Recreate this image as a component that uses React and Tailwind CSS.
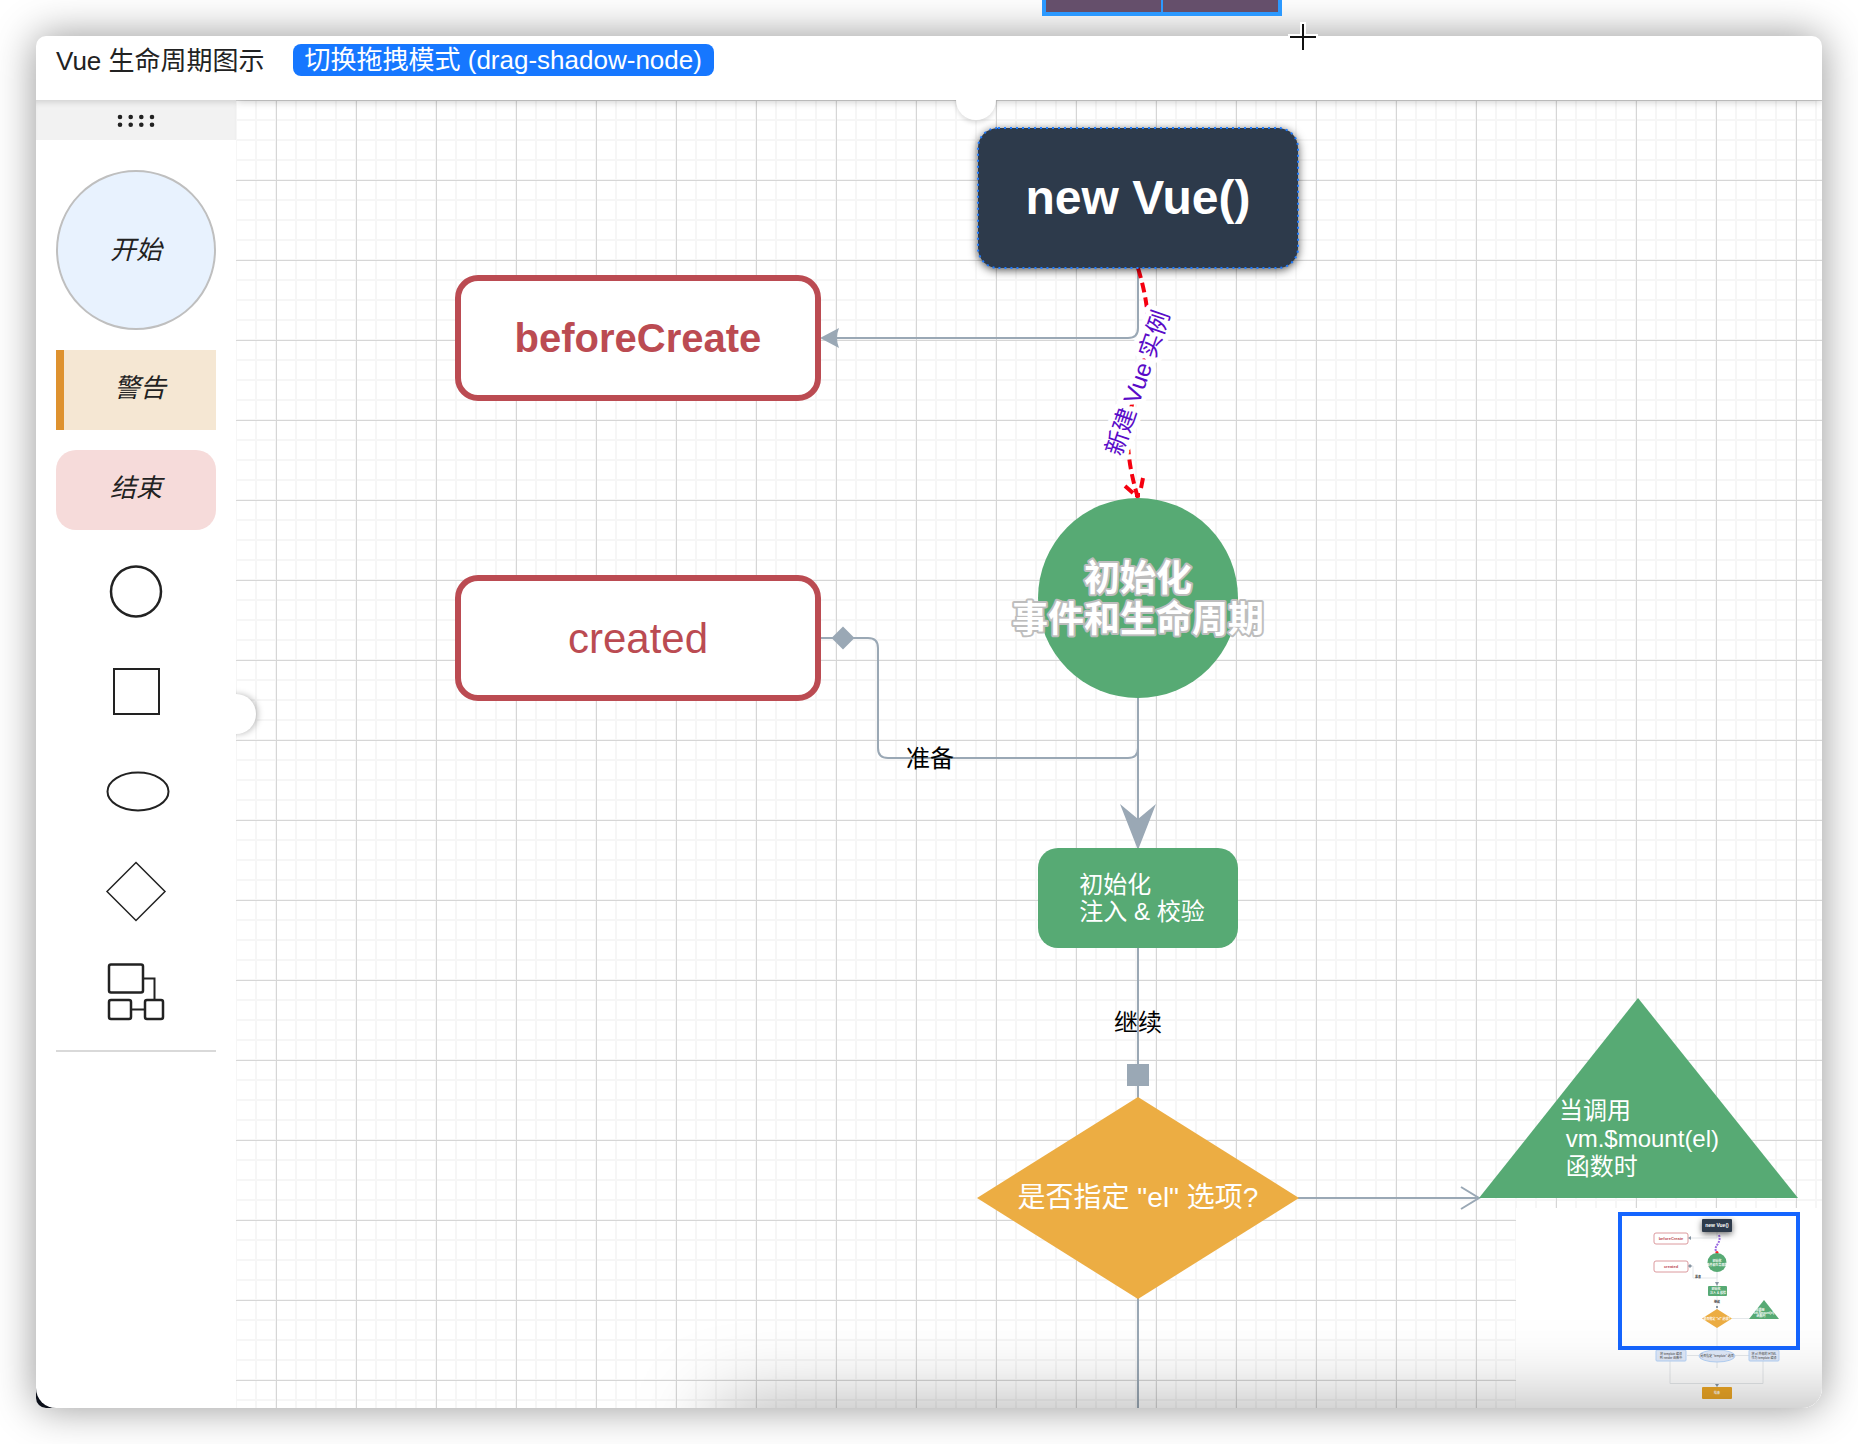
const MAJOR = 80;

const edgeColor = '#9aa8b5';

function GridBackground() {
  return (
    <svg className="absolute inset-0 h-full w-full" aria-hidden="true">
      <defs>
        <pattern id="grid-minor" x="19" y="19" width="20" height="20" patternUnits="userSpaceOnUse">
          <rect width="20" height="2" fill="#f6f6f6" />
          <rect width="2" height="20" fill="#f6f6f6" />
        </pattern>
        <pattern id="grid-major" x="40" y="0" width={MAJOR} height={MAJOR} patternUnits="userSpaceOnUse">
          <rect width={MAJOR} height="1" fill="#d6d6d6" />
          <rect width="1" height={MAJOR} fill="#d6d6d6" />
        </pattern>
      </defs>
      <rect width="100%" height="100%" fill="url(#grid-minor)" />
      <rect width="100%" height="100%" fill="url(#grid-major)" />
    </svg>
  );
}

function Edges() {
  return (
    <svg className="absolute left-0 top-0 h-[1308px] w-[1586px]" fill="none" stroke={edgeColor} strokeWidth="2" aria-hidden="true">
      <path d="M902 168V228Q902 238 892 238H586" />
      <path d="M584 238L603 228Q599 238 603 248Z" fill={edgeColor} stroke="none" />
      <path d="M902 598V648Q902 658 892 658H652Q642 658 642 648V548Q642 538 632 538H584" />
      <path d="M607 526.500L618.500 538L607 549.500L595.500 538Z" fill={edgeColor} stroke="none" />
      <path d="M902 598V735" />
      <path d="M884 704L902 719L920 704L902 750Z" fill={edgeColor} stroke="none" />
      <path d="M902 848V1000M902 1196V1308" />
      <rect x="891" y="964" width="22" height="22" fill={edgeColor} stroke="none" />
      <path d="M1062 1098H1243M1225 1087L1243 1098L1225 1109" />
      <g stroke="#f5000f" strokeWidth="4">
        <path d="M902 168C937 283 867 283 902 398" strokeDasharray="10 5" />
        <path d="M889 386L897 393M907 378L905 388M899 395H904" />
      </g>
    </svg>
  );
}

function LifecycleNode({ className, children }) {
  return <div className={'absolute flex items-center justify-center whitespace-pre ' + className}>{children}</div>;
}

function Canvas() {
  return (
    <main className="relative min-w-0 flex-1 overflow-hidden bg-white">
      <GridBackground />
      <div className="absolute left-[878px] top-[905px] text-2xl leading-9 text-black">继续</div>
      <Edges />
      <div className="absolute left-[670px] top-[641px] text-2xl leading-9 text-black">准备</div>
      <LifecycleNode className="left-[742px] top-[28px] h-[140px] w-[320px] rounded-[20px] bg-[#2d3a4b] text-[48px] font-bold text-white shadow-[0_2px_10px_rgba(0,0,0,0.7)]">
        new Vue()
        <svg className="absolute inset-0 h-full w-full overflow-visible" aria-hidden="true">
          <rect width="320" height="140" rx="20" fill="none" stroke="#1f7bff" strokeWidth="2" strokeDasharray="2 4" />
        </svg>
      </LifecycleNode>
      <LifecycleNode className="left-[219px] top-[175px] h-[126px] w-[366px] rounded-[23px] border-6 border-[#bb4b52] bg-white text-[40px] font-bold text-[#bb4b52]">
        beforeCreate
      </LifecycleNode>
      <LifecycleNode className="left-[219px] top-[475px] h-[126px] w-[366px] rounded-[23px] border-6 border-[#bb4b52] bg-white text-[42px] text-[#bb4b52]">
        created
      </LifecycleNode>
      <svg className="absolute left-[802px] top-[183px] h-[200px] w-[200px] overflow-visible" role="img" aria-label="新建 Vue 实例">
        <text
          x="100"
          y="108"
          textAnchor="middle"
          transform="rotate(-71 100 100)"
          fill="#5a0bc8"
          stroke="#ffffff"
          strokeWidth="10"
          paintOrder="stroke"
          strokeLinejoin="round"
          className="text-2xl"
        >
          新建 Vue 实例
        </text>
      </svg>
      <LifecycleNode className="left-[802px] top-[398px] size-[200px] rounded-full bg-[#57aa74]">
        <svg
          className="size-full overflow-visible text-[36px] font-bold"
          textAnchor="middle"
          fill="#ffffff"
          stroke="#bdbdbd"
          strokeWidth="4"
          strokeLinejoin="round"
          paintOrder="stroke"
        >
          <text x="100" y="93">初始化</text>
          <text x="100" y="134">事件和生命周期</text>
        </svg>
      </LifecycleNode>
      <LifecycleNode className="left-[802px] top-[748px] h-[100px] w-[200px] rounded-[20px] bg-[#57aa74] pl-2 text-2xl leading-[27px] text-white">
        {'初始化\n注入 & 校验'}
      </LifecycleNode>
      <LifecycleNode className="left-[741px] top-[997px] h-[202px] w-[322px] text-[28px] text-white">
        <svg className="absolute inset-0 size-full" viewBox="0 0 322 202" aria-hidden="true">
          <path d="M161 0L322 101L161 202L0 101Z" fill="#ecad43" />
        </svg>
        <span className="relative">是否指定 "el" 选项?</span>
      </LifecycleNode>
      <div className="absolute left-[1243px] top-[898px] h-[200px] w-[319px]">
        <svg className="absolute inset-0 size-full" viewBox="0 0 319 200" aria-hidden="true">
          <path d="M159 0L319 200H0Z" fill="#57aa74" />
        </svg>
        <p className="relative whitespace-pre pl-20 pt-[99px] text-2xl leading-7 text-white">{'当调用\n vm.$mount(el)\n 函数时'}</p>
      </div>
      <Minimap />
      <div className="pointer-events-none absolute -bottom-[80px] -right-[120px] left-[480px] h-20 shadow-[0_0_80px_rgba(0,0,0,0.34)]" />
      <div className="pointer-events-none absolute inset-x-0 -top-2 h-2 shadow-[0_0_10px_rgba(0,0,0,0.3)]" />
      <button aria-label="收起顶部栏" className="absolute -top-5 left-[720px] size-10 rounded-full bg-white shadow-[0_3px_4px_rgba(0,0,0,0.12)]" />
    </main>
  );
}

function Minimap() {
  return (
    <aside aria-label="缩略图" className="absolute bottom-0 right-0 h-[200px] w-[306px] bg-white">
      <svg className="size-full" viewBox="0 0 306 200" fontSize="3" fontWeight="700" textAnchor="middle">
        <defs>
          <filter id="mini-shadow" x="-50%" y="-50%" width="200%" height="220%">
            <feDropShadow dx="0" dy="2" stdDeviation="3" floodOpacity="0.6" />
          </filter>
        </defs>
        <g fill="none" stroke="#e4e7ea">
          <path d="M201 24V30H172M201 64V70H177V58H172M201 64V160M216 110.500H234M171 147.500H234M154 153V175.500H247V153M201 175V182" />
        </g>
        <path d="M203 27C206 36 196 38 201 45" fill="none" stroke="#9a6be0" strokeWidth="2" strokeDasharray="2 1" />
        <circle cx="201" cy="44.500" r="1.500" fill="#f22" />
        <rect x="186" y="11" width="30" height="13" rx="1" fill="#2d3a4b" filter="url(#mini-shadow)" />
        <text x="201" y="19" fontSize="5" fill="#fff">new Vue()</text>
        <g fill="#fff" stroke="#dc9a9e">
          <rect x="138" y="25" width="34" height="11" rx="2" />
          <rect x="138" y="53" width="34" height="11" rx="2" />
        </g>
        <text x="155" y="32" fontSize="4" fill="#bb4b52">beforeCreate</text>
        <text x="155" y="60" fontSize="4" fill="#bb4b52">created</text>
        <circle cx="201" cy="54.500" r="9.500" fill="#57aa74" />
        <g fill="#fff">
          <text x="201" y="54">初始化</text>
          <text x="201" y="58">事件和生命周期</text>
        </g>
        <g fill="#333">
          <text x="182" y="70">准备</text>
          <text x="201" y="95">继续</text>
        </g>
        <g fill="#8796a3">
          <path d="M199 74H203L201 78Z" />
          <rect x="200" y="98" width="2" height="2" />
          <path d="M172 30L175 28V32ZM172 58L174 56L176 58L174 60ZM199 176H203L201 179Z" />
        </g>
        <rect x="192" y="78" width="19" height="10" rx="1" fill="#57aa74" />
        <text x="200" y="82" fill="#fff">初始化</text>
        <text x="202" y="86" fill="#fff">注入 &amp; 校验</text>
        <path d="M201 101L216 110.500L201 120L186 110.500Z" fill="#ecad43" />
        <text x="201" y="112" fill="#fff">是否指定 "el" 选项?</text>
        <path d="M248 92L263 111H233Z" fill="#57aa74" />
        <g fill="#fff">
          <text x="244" y="103">当调用</text>
          <text x="248" y="106">vm.$mount(el)</text>
          <text x="245" y="109">函数时</text>
        </g>
        <g fill="#dfe8f8" stroke="#b5d3f8">
          <rect x="140" y="142" width="30" height="11" rx="1" />
          <ellipse cx="201" cy="148" rx="18" ry="6" />
          <rect x="233" y="142" width="30" height="11" rx="1" />
        </g>
        <g fill="#444" fontWeight="400">
          <text x="155" y="147">将 template 编译</text>
          <text x="155" y="151">到 render 函数中</text>
          <text x="201" y="149">是否指定 "template" 选项</text>
          <text x="248" y="147">将 el 外部的 HTML</text>
          <text x="248" y="151">作为 template 编译</text>
        </g>
        <rect x="186" y="179" width="30" height="12" rx="1" fill="#eba626" />
        <text x="201" y="186" fill="#fff">结束</text>
        <rect x="104" y="6" width="178" height="134" fill="none" stroke="#1565ff" strokeWidth="4" />
      </svg>
    </aside>
  );
}

function ShapeItem({ label, children }) {
  return (
    <button aria-label={label} className="flex h-20 w-full items-center justify-center">
      <svg className="size-20" viewBox="0 0 80 80" fill="none" stroke="#222222" strokeWidth="2">
        {children}
      </svg>
    </button>
  );
}

function Sidebar() {
  return (
    <aside className="relative w-[200px] shrink-0">
      <div className="flex h-10 items-center justify-center bg-[#f2f2f2] shadow-[inset_0_6px_6px_-4px_rgba(0,0,0,0.15)]">
        <svg className="h-5 w-10" viewBox="0 0 40 20" aria-hidden="true">
          <path
            d="M4 7H4.010M14.700 7H14.710M25.300 7H25.310M36 7H36.010M4 14.700H4.010M14.700 14.700H14.710M25.300 14.700H25.310M36 14.700H36.010"
            stroke="#222222"
            strokeWidth="4.600"
            strokeLinecap="round"
          />
        </svg>
      </div>
      <div className="flex flex-col gap-5 px-5 pt-[30px] text-[26px] text-[#222222]">
        <button className="h-40 rounded-full border-2 border-[#bfbfbf] bg-[#e8f2fe] italic">开始</button>
        <button className="h-20 border-l-8 border-[#de922f] bg-[#f5e7d3] pb-1 italic">警告</button>
        <button className="h-20 rounded-[20px] bg-[#f6dbda] pb-1 italic">结束</button>
        <ShapeItem label="圆形">
          <circle cx="40" cy="41.500" r="25" strokeWidth="2.500" />
        </ShapeItem>
        <ShapeItem label="矩形">
          <rect x="18" y="19" width="45" height="45" />
        </ShapeItem>
        <ShapeItem label="椭圆">
          <ellipse cx="42" cy="41.500" rx="30.500" ry="19" />
        </ShapeItem>
        <ShapeItem label="菱形">
          <path d="M40 12.500L69 41.500L40 70.500L11 41.500Z" strokeWidth="1.500" />
        </ShapeItem>
        <ShapeItem label="分组">
          <g strokeWidth="2.500">
            <rect x="13" y="14.500" width="34" height="28" rx="2" />
            <rect x="13" y="50" width="22" height="19" rx="2" />
            <rect x="49" y="50" width="18" height="19" rx="2" />
          </g>
          <path d="M47 28.500H58.500V50M35 59.500H49" />
        </ShapeItem>
        <hr className="border-t-2 border-[#d9d9d9]" />
      </div>
      <button
        aria-label="收起侧边栏"
        className="absolute -right-5 top-[594px] z-10 size-10 rounded-full bg-white shadow-[2px_0_6px_rgba(0,0,0,0.25)] [clip-path:inset(-10px_-10px_-10px_20px)]"
      />
    </aside>
  );
}

export default function App() {
  return (
    <div className="relative flex h-screen flex-col overflow-hidden bg-white p-9 font-['Liberation_Sans','Noto_Sans_CJK_SC',sans-serif]">
      <div className="flex min-h-0 flex-1 flex-col overflow-hidden rounded-t-[10px] rounded-br-[20px] rounded-bl-[10px] bg-white shadow-[0_0_42px_rgba(0,0,0,0.42)]">
        <header className="flex h-16 shrink-0 items-start gap-7 px-5 pt-2 text-[26px] leading-8 text-[#222222]">
          <h1 className="pt-px">Vue 生命周期图示</h1>
          <button className="h-8 rounded-lg bg-[#1677ff] px-3 leading-8 text-white">切换拖拽模式 (drag-shadow-node)</button>
        </header>
        <div className="flex min-h-0 flex-1 bg-[linear-gradient(to_right,#0b0f19_100px,#ffffff_100px)]">
          <div className="z-10 flex rounded-bl-[20px] bg-white">
            <Sidebar />
          </div>
          <Canvas />
        </div>
      </div>
      <div className="absolute left-[1042px] top-0 h-4 w-60 border-4 border-t-0 border-[#2b99ff] bg-[#654f6b]">
        <div className="mx-auto h-full w-[2px] bg-[#2b99ff]" />
      </div>
      <svg className="absolute left-[1287px] top-[21px] size-8" viewBox="0 0 32 32" aria-hidden="true">
        <path d="M16 1V30M1 16H31" stroke="#ffffff" strokeWidth="6" />
        <path d="M16 3V29M3 16H29" stroke="#111111" strokeWidth="2" />
      </svg>
    </div>
  );
}
